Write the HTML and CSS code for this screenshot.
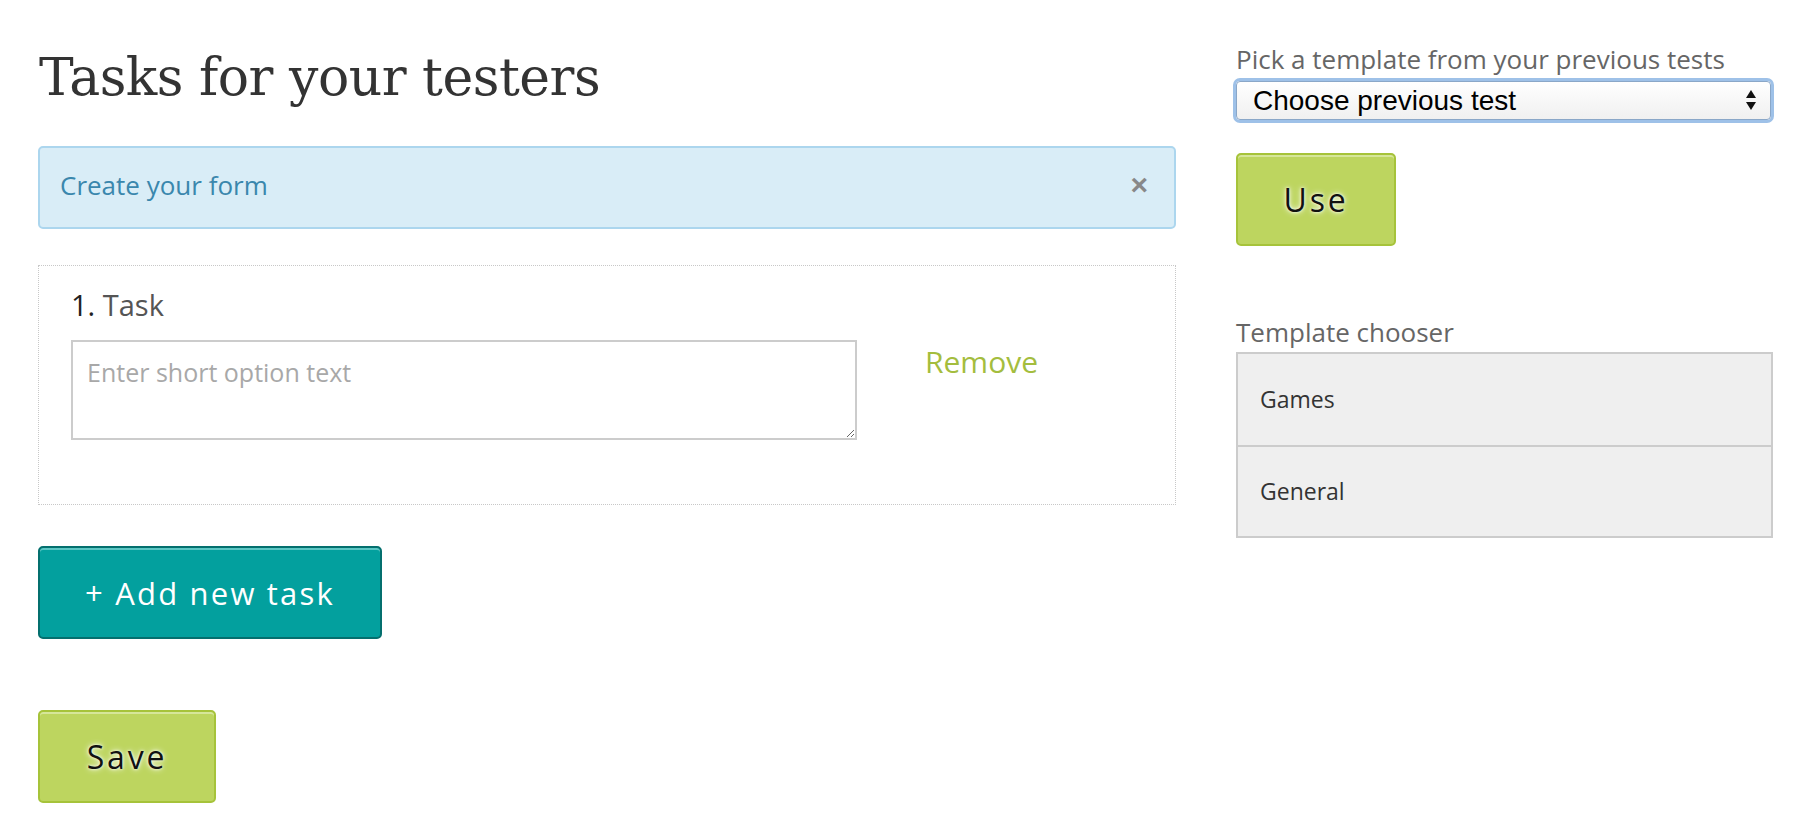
FILE: index.html
```html
<!DOCTYPE html>
<html lang="en">
<head>
<meta charset="utf-8">
<title>Tasks for your testers</title>
<link rel="stylesheet" href="styles.css">
</head>
<body>
<div class="page">
  <main class="main-col">
    <h1 class="title">Tasks for your testers</h1>
    <div class="alert">
      <span class="alert-text">Create your form</span>
      <span class="alert-close">&times;</span>
    </div>
    <section class="task-box">
      <div class="task-label"><span class="task-num">1.</span> Task</div>
      <div class="task-row">
        <textarea class="task-input" placeholder="Enter short option text"></textarea>
        <a class="remove-link" href="#">Remove</a>
      </div>
    </section>
    <div class="actions">
      <button class="btn btn-teal">+ Add new task</button>
    </div>
    <div class="actions actions-save">
      <button class="btn btn-green btn-save">Save</button>
    </div>
  </main>
  <aside class="side-col">
    <label class="side-label">Pick a template from your previous tests</label>
    <div class="select-wrap">
      <select class="select">
        <option>Choose previous test</option>
      </select>
      <svg class="select-arrows" width="12" height="22" viewBox="0 0 12 22"><path d="M6 1 L11 9 L1 9 Z M1 13 L11 13 L6 21 Z" fill="#111"/></svg>
    </div>
    <button class="btn btn-green btn-use">Use</button>
    <div class="side-label chooser-label">Template chooser</div>
    <ul class="chooser">
      <li class="chooser-item">Games</li>
      <li class="chooser-item">General</li>
    </ul>
  </aside>
</div>
</body>
</html>
```

FILE: styles.css
```css
html, body {
  margin: 0;
  padding: 0;
  background: #fff;
}
body {
  font-family: "Open Sans", "Lato", sans-serif;
  color: #333;
}
.page {
  display: flex;
  gap: 60px;
  padding: 0 43px 0 38px;
}
.main-col {
  flex: 0 0 1138px;
  display: flex;
  flex-direction: column;
  align-items: flex-start;
}
.side-col {
  flex: 0 0 537px;
  display: flex;
  flex-direction: column;
  align-items: flex-start;
  padding-top: 44px;
}
.title {
  font-family: "DejaVu Serif", "Liberation Serif", serif;
  font-weight: normal;
  font-size: 52px;
  line-height: 60px;
  color: #333;
  margin: 47px 0 0 1px;
  letter-spacing: -0.5px;
}
.alert {
  box-sizing: border-box;
  align-self: stretch;
  height: 83px;
  margin-top: 39px;
  background: #d9edf7;
  border: 2px solid #acd6ee;
  border-radius: 5px;
  display: flex;
  align-items: center;
  justify-content: space-between;
  padding: 0 26px 6px 20px;
}
.alert-text {
  color: #3a87ad;
  font-size: 26px;
}
.alert-close {
  color: #888;
  font-family: "Liberation Sans", sans-serif;
  font-weight: bold;
  font-size: 30px;
  line-height: 1;
}
.task-box {
  box-sizing: border-box;
  align-self: stretch;
  margin-top: 36px;
  border: 1px dotted #c8c8c8;
  padding: 20px 32px 64px 32px;
}
.task-label {
  font-size: 29px;
  color: #555;
  line-height: 38px;
}
.task-num {
  color: #222;
}
.task-row {
  display: flex;
  align-items: flex-start;
  margin-top: 16px;
}
.task-input {
  box-sizing: border-box;
  width: 786px;
  height: 100px;
  border: 2px solid #ccc;
  padding: 13px 14px;
  font-family: "Open Sans", sans-serif;
  font-size: 25px;
  color: #333;
  resize: vertical;
  margin: 0;
}
.task-input::placeholder {
  color: #a8a8a8;
}
.remove-link {
  margin-left: 68px;
  margin-top: 1px;
  color: #a4bd3e;
  font-size: 30px;
  text-decoration: none;
}
.actions {
  margin-top: 41px;
}
.actions-save {
  margin-top: 71px;
}
.btn {
  box-sizing: border-box;
  height: 93px;
  border-radius: 5px;
  font-family: "Open Sans", sans-serif;
  font-size: 31px;
  letter-spacing: 2.2px;
  cursor: pointer;
  padding: 0;
}
.btn-teal {
  width: 344px;
  background: #03a09e;
  border: 2px solid #046f6e;
  box-shadow: inset 0 2px 0 #5cc6c4;
  color: #fff;
}
.btn-green {
  background: #bdd55f;
  border: 2px solid #a6c33a;
  box-shadow: inset 0 2px 0 #d6e69a;
  color: #111;
  font-size: 32px;
  letter-spacing: 2.8px;
  text-shadow: 0 0 6px #fff, 0 0 3px #fff;
}
.btn-save {
  width: 178px;
}
.btn-use {
  width: 160px;
  margin-top: 30px;
}
.side-label {
  font-size: 26px;
  color: #666;
  line-height: 30px;
}
.select-wrap {
  position: relative;
  box-sizing: border-box;
  width: 541px;
  margin: 4px 0 0 -3px;
  border: 3px solid #9ec1e8;
  border-radius: 7px;
}
.select {
  display: block;
  box-sizing: border-box;
  width: 100%;
  height: 39px;
  -webkit-appearance: none;
  appearance: none;
  border: 1px solid #8aa7c8;
  border-radius: 4px;
  background: linear-gradient(#ffffff, #f0f0f0);
  font-family: "Liberation Sans", Arial, sans-serif;
  font-size: 28px;
  color: #000;
  padding: 0 40px 0 16px;
  margin: 0;
  outline: none;
}
.select-arrows {
  position: absolute;
  right: 14px;
  top: 8px;
}
.chooser-label {
  margin-top: 71px;
}
.chooser {
  list-style: none;
  margin: 5px 0 0;
  padding: 0;
  width: 537px;
  box-sizing: border-box;
  border: 2px solid #ccc;
  background: #efefef;
}
.chooser-item {
  height: 91px;
  display: flex;
  align-items: center;
  padding-left: 22px;
  padding-bottom: 2px;
  box-sizing: border-box;
  font-size: 23px;
  color: #333;
}
.chooser-item + .chooser-item {
  border-top: 2px solid #ccc;
}
```
